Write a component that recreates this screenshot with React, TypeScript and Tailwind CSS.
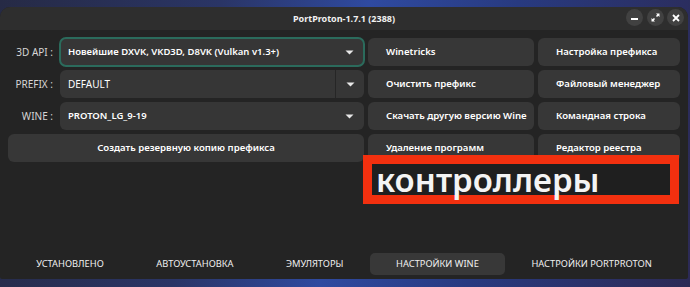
import React from "react";

const font = { fontFamily: '"Noto Sans", "Open Sans", sans-serif' };

const Arrow = () => (
  <svg width="9" height="5" viewBox="0 0 9 5" className="shrink-0">
    <path d="M0.5 0.5 L8.5 0.5 L4.5 4.5 Z" fill="#e8e8e8" />
  </svg>
);

const Combo = ({
  label,
  value,
  bold = true,
  focused = false,
  split = false,
}: {
  label: string;
  value: string;
  bold?: boolean;
  focused?: boolean;
  split?: boolean;
}) => (
  <div className="flex h-[28px] items-center">
    <span className="w-[48px] shrink-0 pr-[3px] text-right text-[10px] whitespace-nowrap text-[#d6d6d6]">
      {label}
    </span>
    <div
      className={`ml-[4px] flex h-full flex-1 items-center rounded-[6px] bg-[#363636] ${
        focused ? "outline-2 -outline-offset-1 outline-[#2b6b5c]" : ""
      }`}
    >
      <span
        className={`flex-1 pl-[8px] text-white ${bold ? "text-[9.5px] font-semibold" : "text-[10px]"}`}
      >
        {value}
      </span>
      {split ? (
        <div className="flex h-full w-[29px] items-center justify-center border-l border-[#262626]">
          <Arrow />
        </div>
      ) : (
        <div className="flex h-full w-[29px] items-center justify-center">
          <Arrow />
        </div>
      )}
    </div>
  </div>
);

const Btn = ({ text, center = false }: { text: string; center?: boolean }) => (
  <div
    className={`flex h-[28px] items-center rounded-[6px] bg-[#373737] text-[9.6px] font-semibold whitespace-nowrap text-white ${
      center ? "justify-center" : "pl-[18px]"
    }`}
  >
    {text}
  </div>
);

const tabs = ["УСТАНОВЛЕНО", "АВТОУСТАНОВКА", "ЭМУЛЯТОРЫ", "НАСТРОЙКИ WINE", "НАСТРОЙКИ PORTPROTON"];

export default function App() {
  return (
    <div
      className="relative h-[287px] w-[690px] overflow-hidden bg-[linear-gradient(100deg,#262a45_0%,#2a3566_30%,#2f4aa0_50%,#283a80_70%,#2c2a55_100%)] pt-[7px]"
      style={font}
    >
      <div className="flex h-[272px] w-[688px] flex-col overflow-hidden rounded-t-[10px] rounded-b-[2px] bg-[#242424]">
        {/* title bar */}
        <div className="relative flex h-[23px] shrink-0 items-center justify-center bg-[#2e2e2e]">
          <span className="text-[9px] font-bold text-[#f2f2f2]">PortProton-1.7.1 (2388)</span>
          <div className="absolute top-[2px] right-[4px] flex gap-[3.5px]">
            <div className="flex h-[17px] w-[17px] items-center justify-center rounded-full bg-[#414141]">
              <div className="mt-[3px] h-[2px] w-[7px] bg-white" />
            </div>
            <div className="flex h-[17px] w-[17px] items-center justify-center rounded-full bg-[#414141]">
              <svg width="9" height="9" viewBox="0 0 9 9">
                <path d="M5 0.5 H8.5 V4 Z M4 8.5 H0.5 V5 Z" fill="white" />
                <path d="M7.5 1.5 L5.5 3.5 M1.5 7.5 L3.5 5.5" stroke="white" strokeWidth="1.6" />
              </svg>
            </div>
            <div className="flex h-[17px] w-[17px] items-center justify-center rounded-full bg-[#414141]">
              <svg width="8" height="8" viewBox="0 0 8 8">
                <path d="M1 1 L7 7 M7 1 L1 7" stroke="white" strokeWidth="1.8" />
              </svg>
            </div>
          </div>
        </div>

        {/* body */}
        <div className="flex flex-1 flex-col px-[8px] pt-[8px] pb-[4px]">
          <div className="grid grid-cols-[356px_166px_142px] gap-x-[4px] gap-y-[4px]">
            <Combo label="3D API :" value="Новейшие DXVK, VKD3D, D8VK (Vulkan v1.3+)" focused />
            <Btn text="Winetricks" />
            <Btn text="Настройка префикса" />

            <Combo label="PREFIX :" value="DEFAULT" bold={false} split />
            <Btn text="Очистить префикс" />
            <Btn text="Файловый менеджер" />

            <Combo label="WINE :" value="PROTON_LG_9-19" />
            <Btn text="Скачать другую версию Wine" />
            <Btn text="Командная строка" />

            <Btn text="Создать резервную копию префикса" center />
            <Btn text="Удаление программ" />
            <Btn text="Редактор реестра" />
          </div>

          <div className="mt-auto flex px-[2px]">
            {tabs.map((t) => (
              <div
                key={t}
                className={`flex h-[22px] flex-auto items-center justify-center rounded-[5px] px-[24px] text-[9.3px] whitespace-nowrap text-[#f0f0f0] ${
                  t === "НАСТРОЙКИ WINE" ? "bg-[#383838]" : ""
                }`}
              >
                {t}
              </div>
            ))}
          </div>
        </div>
      </div>

      {/* annotation overlay */}
      <div className="absolute top-[155px] left-[363px] flex h-[49px] w-[316px] items-center border-[9px] border-[#f2300f] bg-[#1f1f1f]">
        <span
          className="pl-[4px] text-[33px] leading-none font-semibold text-[#f4f4f4]"
          style={{ fontFamily: '"Noto Sans", sans-serif' }}
        >
          контроллеры
        </span>
      </div>
    </div>
  );
}
